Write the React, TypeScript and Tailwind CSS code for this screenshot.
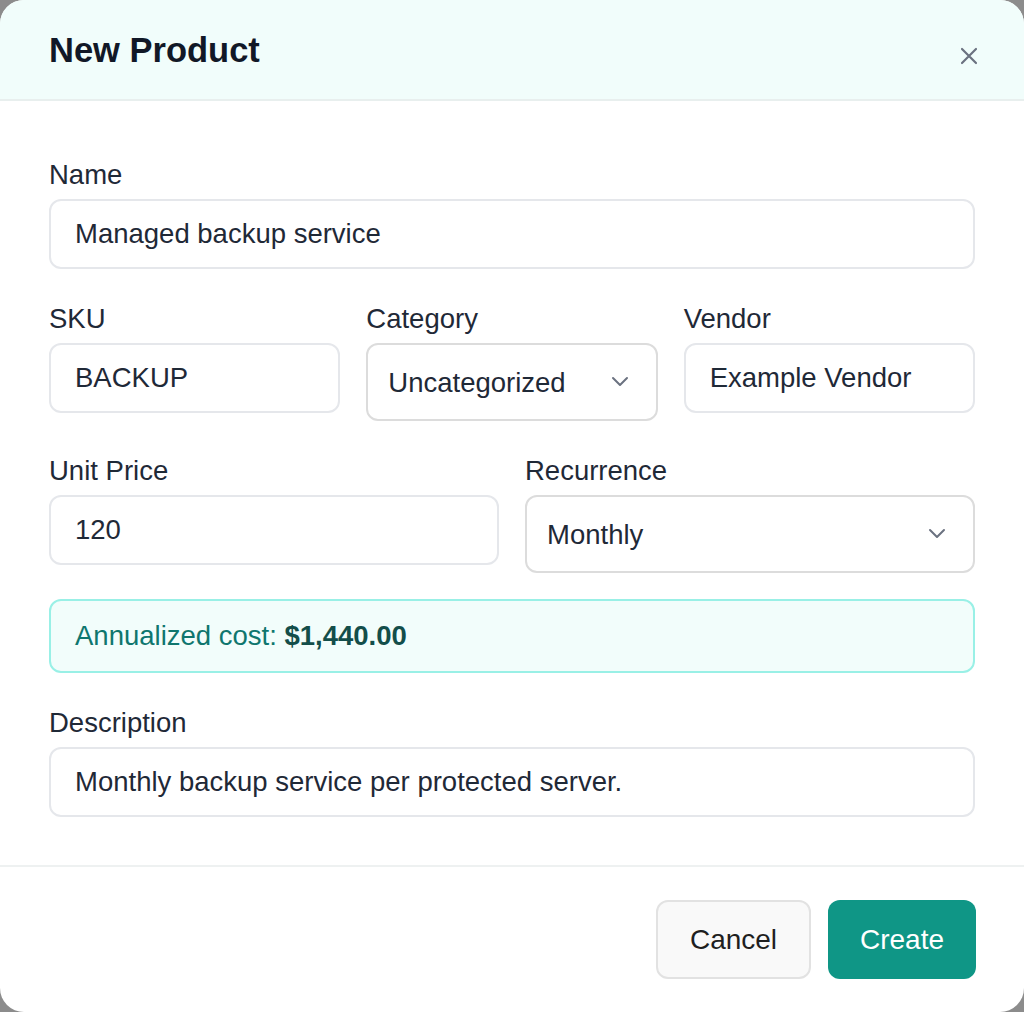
import React from "react";

const Label = ({ children }: { children: React.ReactNode }) => (
  <div className="h-[24px] leading-[24px] text-[27.5px] text-[#1f2937] mb-3">{children}</div>
);

const Input = ({ value, cls = "" }: { value: string; cls?: string }) => (
  <div className={`h-[70px] border-2 border-[#e5e7eb] rounded-[12px] bg-white flex items-center px-[24px] text-[27.5px] text-[#1f2937] ${cls}`}>
    {value}
  </div>
);

const Select = ({ value }: { value: string }) => (
  <div className="h-[78px] border-2 border-[#dcdcdc] rounded-[12px] bg-white flex items-center justify-between pl-[20px] pr-[26px] text-[27.5px] text-[#1f2937]">
    <span className="mt-[2px]">{value}</span>
    <svg width="20" height="12" viewBox="0 0 20 12" fill="none" stroke="#6b7280" strokeWidth="2" strokeLinecap="round" strokeLinejoin="round">
      <path d="M3 2l7 7 7-7" />
    </svg>
  </div>
);

export default function App() {
  return (
    <div className="w-[1024px] h-[1012px] bg-[#8c8c8c]" style={{ fontFamily: '"Liberation Sans", Arial, sans-serif' }}>
      <div className="w-full h-full bg-white rounded-[24px] overflow-hidden flex flex-col">
        <div className="h-[101px] bg-[#f1fdfb] border-b-2 border-[#e8efee] flex items-start justify-between pl-[49px] pr-[46px] pt-[30px] shrink-0">
          <h1 className="text-[34.5px] font-bold text-[#111827] leading-[40px]">New Product</h1>
          <svg className="mt-[17px]" width="18" height="18" viewBox="0 0 18 18" stroke="#6b7280" strokeWidth="2.2" strokeLinecap="round">
            <path d="M2 2l14 14M16 2L2 16" />
          </svg>
        </div>
        <div className="px-[49px] pt-[62px] pb-[48px] flex flex-col border-b-2 border-[#eef1f1]">
          <Label>Name</Label>
          <Input value="Managed backup service" />
          <div className="grid grid-cols-3 gap-x-[26px] mt-[38px] items-start">
            <div><Label>SKU</Label><Input value="BACKUP" /></div>
            <div><Label>Category</Label><Select value="Uncategorized" /></div>
            <div><Label>Vendor</Label><Input value="Example Vendor" /></div>
          </div>
          <div className="grid grid-cols-2 gap-x-[26px] mt-[38px] items-start">
            <div><Label>Unit Price</Label><Input value="120" /></div>
            <div><Label>Recurrence</Label><Select value="Monthly" /></div>
          </div>
          <div className="mt-[26px] h-[74px] rounded-[12px] border-2 border-[#99f0e6] bg-[#f2fdfb] flex items-center px-[24px] text-[27.5px] text-[#0f766e]">
            Annualized cost:&nbsp;<span className="font-bold text-[#134e4a]">$1,440.00</span>
          </div>
          <div className="mt-[38px]"><Label>Description</Label></div>
          <Input value="Monthly backup service per protected server." />
        </div>
        <div className="flex justify-end gap-[17px] px-[48px] pt-[33px]">
          <button className="w-[155px] h-[79px] rounded-[12px] border-2 border-[#e2e2e2] bg-[#f9f9f9] text-[28px] text-[#1f1f1f]">Cancel</button>
          <button className="w-[148px] h-[79px] rounded-[12px] bg-[#0f9686] text-[28px] text-white">Create</button>
        </div>
      </div>
    </div>
  );
}
